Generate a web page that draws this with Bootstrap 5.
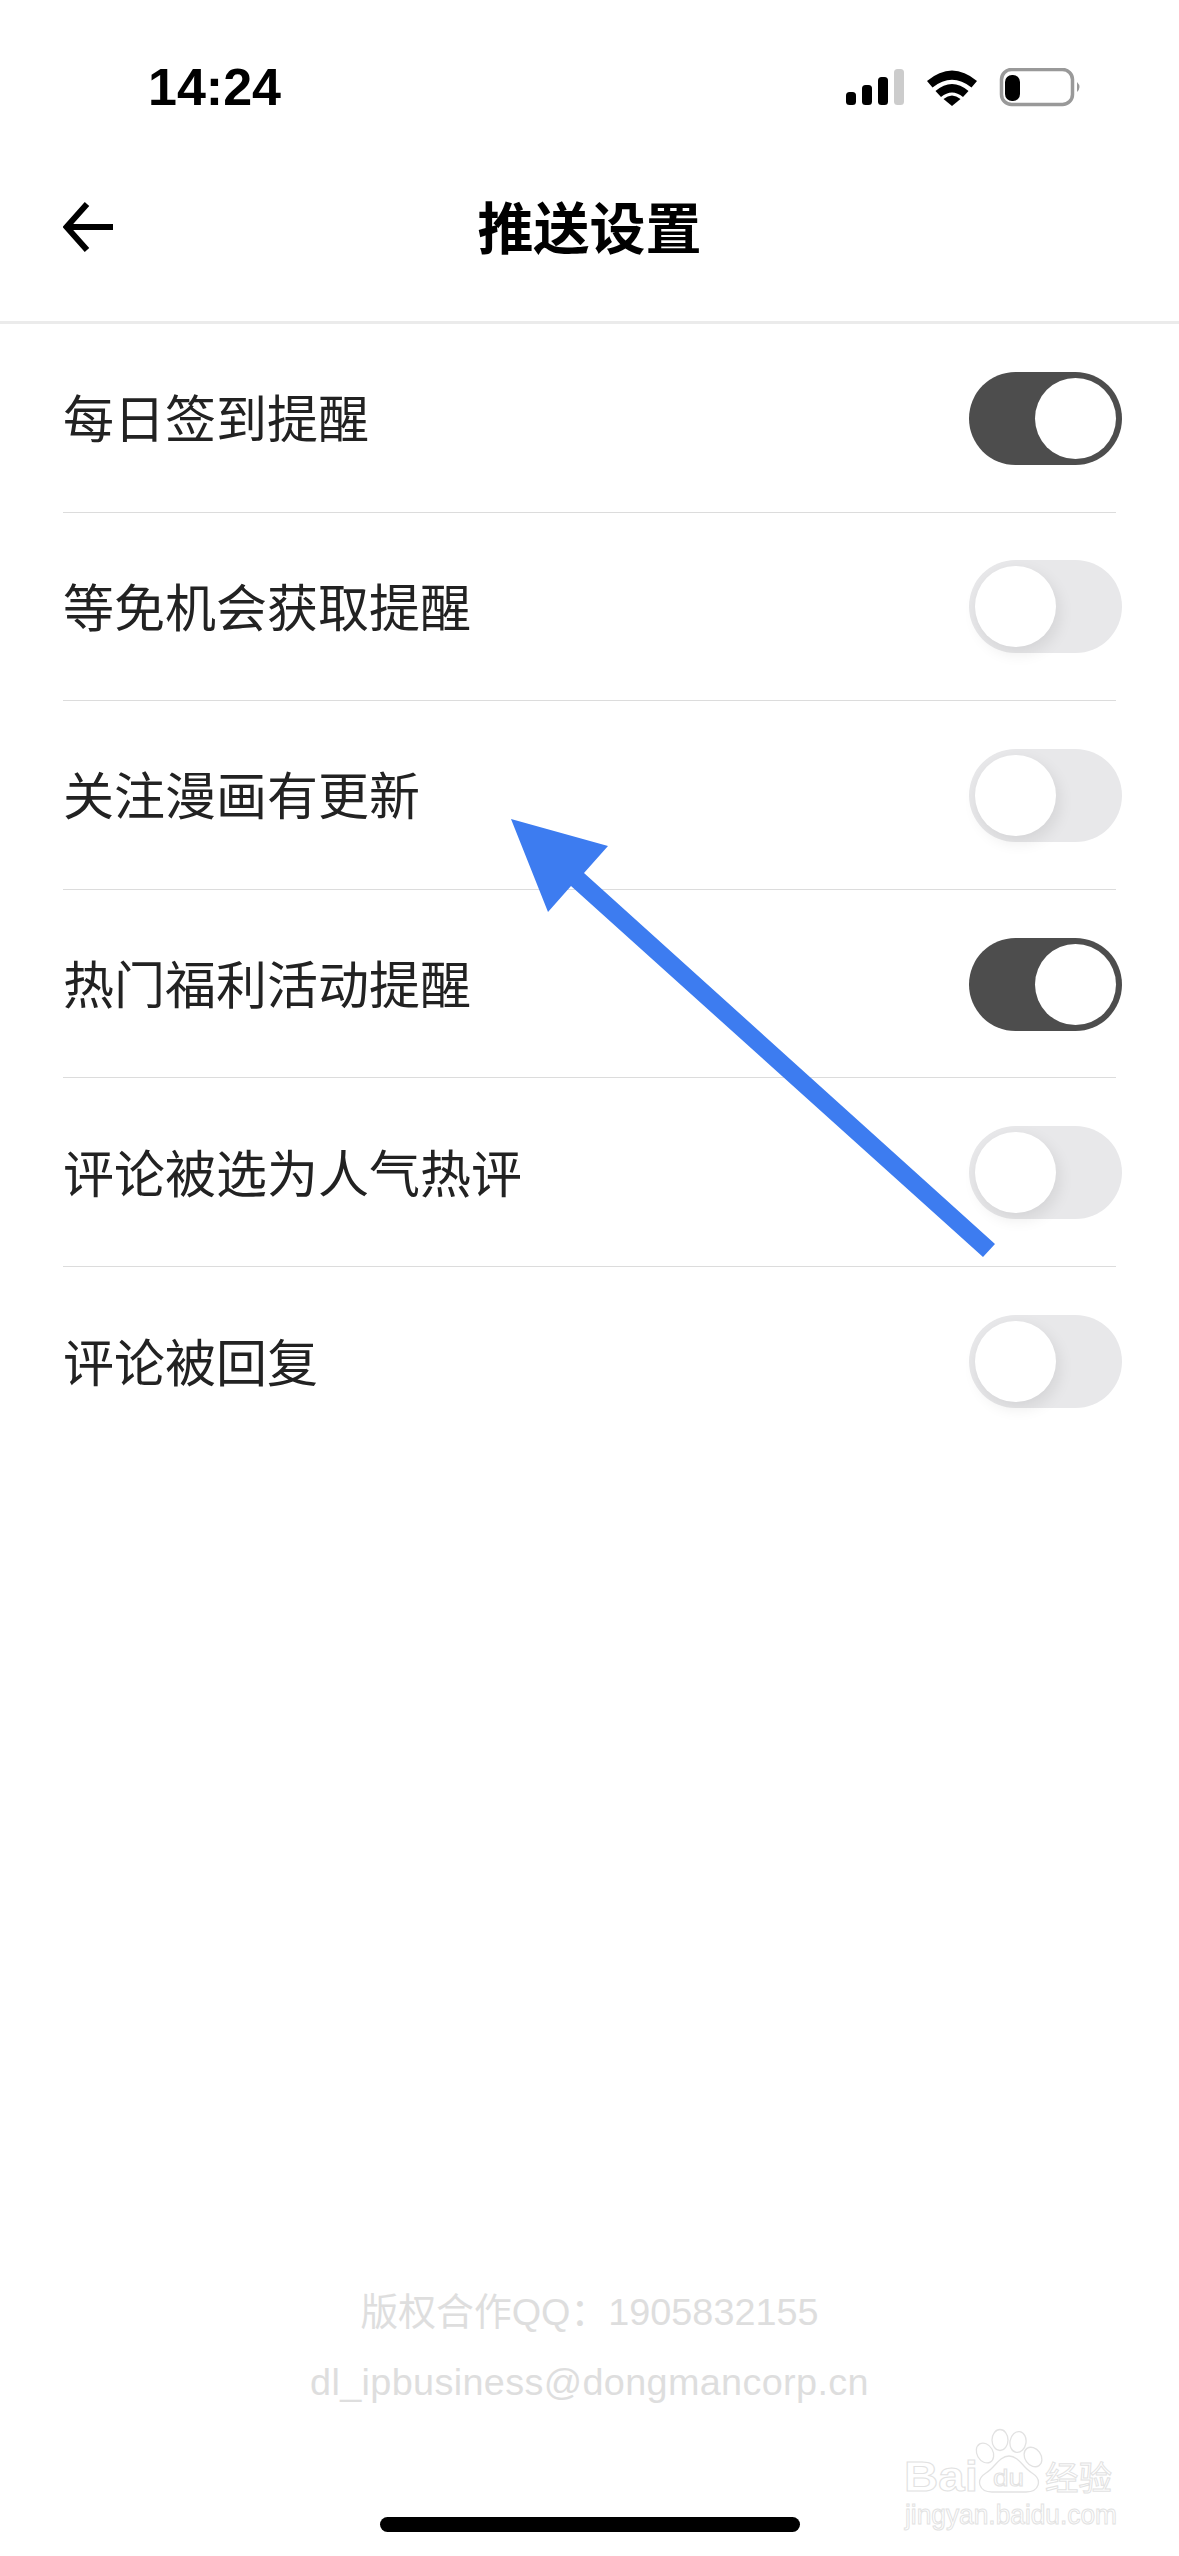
<!DOCTYPE html>
<html lang="zh-CN">
<head>
<meta charset="utf-8">
<title>推送设置</title>
<link rel="stylesheet" href="https://cdn.jsdelivr.net/npm/bootstrap@5.3.0/dist/css/bootstrap.min.css">
<style>
html,body{margin:0;background:#fff}
.phone{position:relative;width:1179px;height:2556px;overflow:hidden;background:#fff;font-family:"Liberation Sans","Noto Sans CJK SC",sans-serif;color:#222}
.statusbar{height:130px;padding:60px 98px 0 148px}
.clock{font-size:52px;font-weight:700;line-height:54px;color:#000}
.sysicons{display:block;margin-top:8px}
.topbar{height:194px;border-bottom:3px solid #ebebeb}
.topbar-inner{height:191px;padding:2px 63px 0;position:relative}
.backbtn{display:block}
.page-title{position:absolute;left:0;right:0;top:61px;margin:0;text-align:center;font-size:56px;line-height:68px;font-weight:700;color:#000;font-family:"Noto Sans CJK SC",sans-serif}
.setting-list{padding:0 63px}
.setting-row{height:188.6px;border:0;border-bottom:2px solid #dcdcdc;background:transparent;padding:0;border-radius:0}
.setting-name{font-size:51px;line-height:64px;font-weight:400;color:#222;font-family:"Noto Sans CJK SC",sans-serif;margin-top:-3px}
.toggle-track{width:153px;height:93px;border-radius:47px;padding:6px;flex:none;margin-right:-6px;margin-top:1px}
.toggle-on{background:#4d4d4d;justify-content:flex-end}
.toggle-off{background:#e8e8ea;justify-content:flex-start}
.toggle-knob{width:81px;height:81px;border-radius:50%;background:#fff}
.toggle-off .toggle-knob{box-shadow:3px 6px 16px rgba(0,0,0,.09)}
.foot-info{position:absolute;left:0;right:0;top:2277px;text-align:center;color:#dedede;font-size:37.8px;line-height:70px;font-family:"Liberation Sans","Noto Sans CJK SC",sans-serif}
.foot-mail{letter-spacing:.35px}
.home-bar{position:absolute;left:380px;top:2517px;width:420px;height:15px;border-radius:8px;background:#000}
.arrow-overlay{position:absolute;left:0;top:0;pointer-events:none}
.mark-overlay{position:absolute;left:880px;top:2425px;width:260px;height:115px}
.mark-overlay text{fill:#fff;stroke:#e2e2e2;stroke-width:1px;font-family:"Liberation Sans","Noto Sans CJK SC",sans-serif}
</style>
</head>
<body>
<div class="phone">
  <div class="statusbar d-flex justify-content-between align-items-start">
    <div class="clock">14:24</div>
    <svg class="sysicons" width="240" height="44" viewBox="0 0 240 44" xmlns="http://www.w3.org/2000/svg">
      <rect x="5" y="24" width="10" height="13" rx="3.5" fill="#000"/>
      <rect x="21" y="17" width="10" height="20" rx="3.5" fill="#000"/>
      <rect x="37" y="9" width="10" height="28" rx="3.5" fill="#000"/>
      <rect x="53" y="1" width="10" height="36" rx="3.5" fill="#ccc"/>
      <path d="M86 13 Q111 -8 136 13 L130.500 19.500 Q111 4 91.500 19.500 Z" fill="#000"/>
      <path d="M94.500 23 Q111 9 127.500 23 L122 29 Q111 20 100 29 Z" fill="#000"/>
      <path d="M102.500 31 Q111 24 119.500 31 L111 38 Z" fill="#000"/>
      <rect x="160.500" y="1.500" width="71" height="35" rx="10" fill="none" stroke="#999" stroke-width="3.500"/>
      <rect x="164" y="7" width="15" height="26" rx="7" fill="#000"/>
      <path d="M236 14 Q241 19 236 24 Z" fill="#999"/>
    </svg>
  </div>
  <div class="topbar">
    <div class="topbar-inner d-flex align-items-center">
      <svg class="backbtn" width="52" height="50" viewBox="0 0 52 50" xmlns="http://www.w3.org/2000/svg">
        <path d="M24 2 L3.500 25 L24 48 M3.500 25 H50" fill="none" stroke="#000" stroke-width="6"/>
      </svg>
      <h1 class="page-title">推送设置</h1>
    </div>
  </div>
  <div class="setting-list list-group list-group-flush">
    <div class="setting-row list-group-item d-flex justify-content-between align-items-center"><span class="setting-name">每日签到提醒</span><div class="toggle-track toggle-on d-flex"><div class="toggle-knob"></div></div></div>
    <div class="setting-row list-group-item d-flex justify-content-between align-items-center"><span class="setting-name">等免机会获取提醒</span><div class="toggle-track toggle-off d-flex"><div class="toggle-knob"></div></div></div>
    <div class="setting-row list-group-item d-flex justify-content-between align-items-center"><span class="setting-name">关注漫画有更新</span><div class="toggle-track toggle-off d-flex"><div class="toggle-knob"></div></div></div>
    <div class="setting-row list-group-item d-flex justify-content-between align-items-center"><span class="setting-name">热门福利活动提醒</span><div class="toggle-track toggle-on d-flex"><div class="toggle-knob"></div></div></div>
    <div class="setting-row list-group-item d-flex justify-content-between align-items-center"><span class="setting-name">评论被选为人气热评</span><div class="toggle-track toggle-off d-flex"><div class="toggle-knob"></div></div></div>
    <div class="setting-row list-group-item d-flex justify-content-between align-items-center"><span class="setting-name">评论被回复</span><div class="toggle-track toggle-off d-flex"><div class="toggle-knob"></div></div></div>
  </div>
  <div class="foot-info">
    <div>版权合作QQ：1905832155</div>
    <div class="foot-mail">dl_ipbusiness@dongmancorp.cn</div>
  </div>
  <div class="home-bar"></div>
  <svg class="arrow-overlay" width="1179" height="2556" viewBox="0 0 1179 2556" xmlns="http://www.w3.org/2000/svg">
    <polygon points="511,819 608,846 584,873 995,1244 983,1257 571,886 548,912" fill="#3d7cf0"/>
  </svg>
  <svg class="mark-overlay" viewBox="880 2425 260 115" xmlns="http://www.w3.org/2000/svg">
    <g fill="#fff" stroke="#e2e2e2" stroke-width="1.300">
      <ellipse cx="1000" cy="2440" rx="8" ry="10.500"/>
      <ellipse cx="1018" cy="2442" rx="8" ry="10.500" transform="rotate(10 1018 2442)"/>
      <ellipse cx="985" cy="2453" rx="8" ry="10.500" transform="rotate(-30 985 2453)"/>
      <ellipse cx="1033" cy="2457" rx="8" ry="10.500" transform="rotate(-35 1033 2457)"/>
      <path d="M1009 2456 C1019 2456 1023 2468 1032 2473 C1043 2480 1039 2492 1026 2492 C1016 2492 1002 2492 992 2492 C979 2492 975 2480 986 2473 C995 2468 999 2456 1009 2456 Z"/>
    </g>
    <text x="904" y="2491" font-size="42" font-weight="700" textLength="74" lengthAdjust="spacingAndGlyphs">Bai</text>
    <text x="993" y="2486" font-size="24" textLength="31" lengthAdjust="spacingAndGlyphs">du</text>
    <text x="1045" y="2490" font-size="33" textLength="67" lengthAdjust="spacingAndGlyphs">经验</text>
    <text x="905" y="2524" font-size="28" textLength="212" lengthAdjust="spacingAndGlyphs">jingyan.baidu.com</text>
  </svg>
</div>
<script src="https://cdn.jsdelivr.net/npm/bootstrap@5.3.0/dist/js/bootstrap.bundle.min.js"></script>
</body>
</html>
